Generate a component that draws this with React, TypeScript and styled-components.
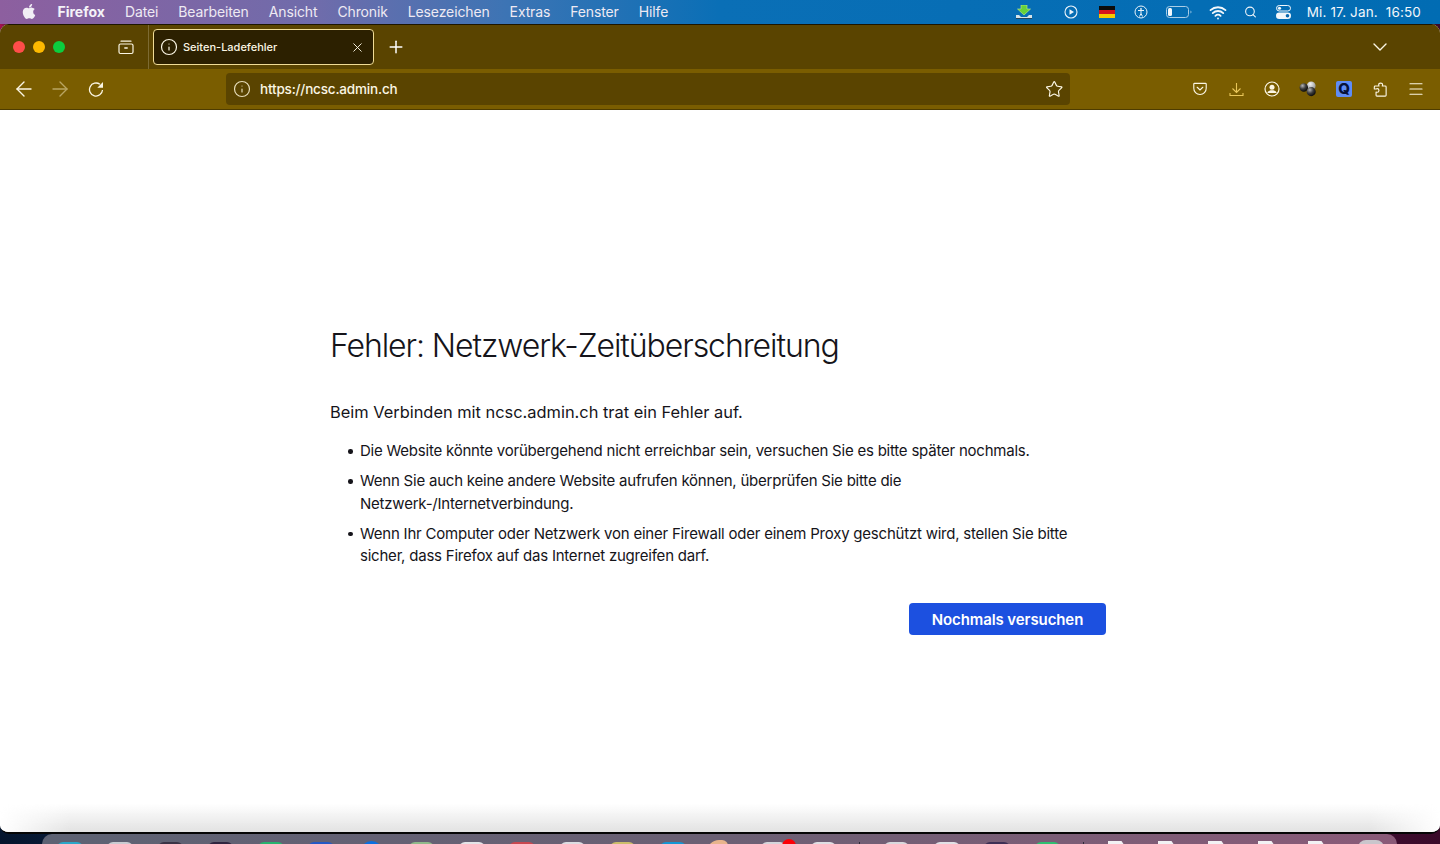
import styled, { createGlobalStyle } from 'styled-components';
import {
  ArrowLeft,
  ArrowRight,
  ChevronDown,
  Info,
  Menu,
  Plus,
  Search,
  Star,
  Wifi,
  X
} from 'lucide-react';
import { FaApple } from 'react-icons/fa';

const GlobalStyle = createGlobalStyle`
  html, body {
    margin: 0;
    padding: 0;
    height: 100%;
    overflow: hidden;
  }
  body {
    font-family: Inter, "Liberation Sans", sans-serif;
  }
`;

const menuItems = ['Datei', 'Bearbeiten', 'Ansicht', 'Chronik', 'Lesezeichen', 'Extras', 'Fenster', 'Hilfe'];

const hints = [
  'Die Website könnte vorübergehend nicht erreichbar sein, versuchen Sie es bitte später nochmals.',
  'Wenn Sie auch keine andere Website aufrufen können, überprüfen Sie bitte die Netzwerk-/Internetverbindung.',
  'Wenn Ihr Computer oder Netzwerk von einer Firewall oder einem Proxy geschützt wird, stellen Sie bitte sicher, dass Firefox auf das Internet zugreifen darf.'
];

// sichtbare Oberkanten der Dock-Icons, von links nach rechts
const dockLeft = ['#2aa7c9', '#c9ccd2', '#3a3346', '#2f2540', '#27b36f', '#2458c4'];
const dockLeftRest = ['#8fb98a', '#e4e4e8', '#c9474f', '#dcdde2', '#cbbd6a', '#1496d4'];
const dockMiddle = ['#d8d8dd', '#e1e1e6', '#3d2f55', '#2fbf71'];
const dockDocs = 5;

const App = () => {
  return (
    <Desktop>
      <GlobalStyle />
      <MenuBar>
        <MenuGroup>
          <AppleSlot>
            <FaApple size={17} color="#f1eef5" />
          </AppleSlot>
          <AppName>Firefox</AppName>
          {menuItems.map((item) => (
            <MenuItem key={item}>{item}</MenuItem>
          ))}
        </MenuGroup>
        <StatusGroup>
          <StatusSlot $width={18} $gap={31}>
            <svg width="18" height="14" viewBox="0 0 18 14">
              <path d="M6 0h6v4h3.500L9 10 2.500 4H6z" fill="#66d23a" stroke="#c8f08c" strokeWidth="0.6" />
              <path d="M1 10h3l2 2h6l2-2h3v3H1z" fill="#d5e4ea" />
              <rect x="1" y="13" width="16" height="1" fill="#25465c" />
            </svg>
          </StatusSlot>
          <StatusSlot $width={14} $gap={21}>
            <svg width="14" height="14" viewBox="0 0 14 14" fill="none">
              <circle cx="7" cy="7" r="6" stroke="#eaf3fa" strokeWidth="1.1" />
              <path d="M5.500 4.300v5.400L10 7z" fill="#eaf3fa" />
            </svg>
          </StatusSlot>
          <StatusSlot $width={16} $gap={19}>
            <Flag>
              <FlagStripe $color="#0c0c0c" />
              <FlagStripe $color="#d8141c" />
              <FlagStripe $color="#f7c900" />
            </Flag>
          </StatusSlot>
          <StatusSlot $width={14} $gap={18}>
            <svg width="14" height="14" viewBox="0 0 14 14" fill="none" stroke="#eaf3fa">
              <circle cx="7" cy="7" r="6" strokeWidth="1" />
              <circle cx="7" cy="4" r="0.9" fill="#eaf3fa" stroke="none" />
              <path d="M4 5.500h6M7 5.500v3M7 8.500l-1.500 3M7 8.500l1.500 3" strokeWidth="1" />
            </svg>
          </StatusSlot>
          <StatusSlot $width={26} $gap={17}>
            <svg width="26" height="12" viewBox="0 0 26 12" fill="none">
              <rect x="0.500" y="0.500" width="22" height="11" rx="3" stroke="#a9cde6" />
              <rect x="2" y="2" width="4" height="8" rx="1.500" fill="#f2f7fb" />
              <path d="M24.500 4.500v3c.7-.3 1-.9 1-1.500s-.3-1.200-1-1.500z" fill="#a9cde6" />
            </svg>
          </StatusSlot>
          <StatusSlot $width={18} $gap={17}>
            <Wifi size={19} strokeWidth={2.4} color="#f2f7fb" />
          </StatusSlot>
          <StatusSlot $width={13} $gap={19}>
            <Search size={18} strokeWidth={2} color="#f2f7fb" />
          </StatusSlot>
          <StatusSlot $width={15} $gap={16}>
            <svg width="15" height="14" viewBox="0 0 15 14">
              <rect x="0.500" y="0.500" width="14" height="5.500" rx="2.750" fill="none" stroke="#f2f7fb" />
              <circle cx="3.500" cy="3.250" r="1.600" fill="#f2f7fb" />
              <rect x="0" y="7.500" width="15" height="6.500" rx="3.250" fill="#f2f7fb" />
              <circle cx="11.500" cy="10.750" r="1.800" fill="#0a68ae" />
            </svg>
          </StatusSlot>
          <Clock>Mi. 17. Jan.&nbsp; 16:50</Clock>
        </StatusGroup>
      </MenuBar>

      <BrowserWindow>
        <TabStrip>
          <TrafficLights>
            <Light $color="#ff4d4a" />
            <Light $color="#fdb900" />
            <Light $color="#0ccd3f" />
          </TrafficLights>
          <TabListButton>
            <svg width="16" height="16" viewBox="0 0 16 16" fill="none" stroke="#fbf6e4" strokeWidth="1.200">
              <rect x="1" y="5" width="14" height="9.500" rx="1.500" />
              <path d="M3 2.200h10" strokeLinecap="round" />
              <path d="M6.300 9h3.400" strokeWidth="1.600" />
            </svg>
          </TabListButton>
          <TabDivider />
          <Tab>
            <Info size={18} strokeWidth={1.6} color="#fbf6e4" />
            <TabTitle>Seiten-Ladefehler</TabTitle>
            <X size={15} strokeWidth={1.5} color="#fbf6e4" />
          </Tab>
          <NewTab>
            <Plus size={20} strokeWidth={1.8} color="#fff" />
          </NewTab>
          <TabOverflow>
            <ChevronDown size={24} strokeWidth={1.4} color="#fbf6e4" />
          </TabOverflow>
        </TabStrip>

        <NavBar>
          <NavButtons>
            <NavButton>
              <ArrowLeft size={24} strokeWidth={1.4} color="#fbf6e4" />
            </NavButton>
            <NavButton>
              <ArrowRight size={24} strokeWidth={1.4} color="#b9a562" />
            </NavButton>
            <NavButton>
              <svg width="16" height="16" viewBox="0 0 16 16" fill="none">
                <path d="M14.500 9a6.500 6.500 0 1 1-2.600-5.700" stroke="#fbf6e4" strokeWidth="1.300" />
                <path d="M15 1v5.800H9.300z" fill="#fbf6e4" />
              </svg>
            </NavButton>
          </NavButtons>
          <UrlBar>
            <Info size={18} strokeWidth={1.6} color="#e6dcb8" />
            <UrlText>https://ncsc.admin.ch</UrlText>
            <StarSlot>
              <Star size={18.500} strokeWidth={1.5} color="#fbf6e4" />
            </StarSlot>
          </UrlBar>
          <Toolbar>
            <ToolSlot>
              <svg width="14" height="14" viewBox="0 0 16 15" fill="none" stroke="#fbf6e4" strokeWidth="1.300">
                <path d="M1.800 1h12.400c.5 0 .9.400.9.900V6.500A7 7 0 0 1 8 13.800 7 7 0 0 1 .9 6.500V1.900c0-.5.400-.9.900-.9z" />
                <path d="M4.800 5.500 8 8.600l3.200-3.100" strokeLinecap="round" />
              </svg>
            </ToolSlot>
            <ToolSlot>
              <svg width="15" height="15" viewBox="0 0 15 15" fill="none" stroke="#e9c65a" strokeWidth="1.100">
                <path d="M7.500 1v9M3.500 6.500l4 4 4-4" />
                <path d="M1 11v2.500h13V11" />
              </svg>
            </ToolSlot>
            <ToolSlot>
              <svg width="16" height="16" viewBox="0 0 16 16" fill="none">
                <circle cx="8" cy="8" r="7" stroke="#fbf6e4" strokeWidth="1.200" />
                <circle cx="8" cy="6.200" r="2.500" fill="#fbf6e4" />
                <path d="M3.500 11.200c1-1.400 2.600-1.900 4.500-1.900s3.500.5 4.500 1.900v.8h-9z" fill="#fbf6e4" />
              </svg>
            </ToolSlot>
            <ToolSlot>
              <svg width="18" height="16" viewBox="0 0 17 15">
                <defs>
                  <radialGradient id="ball" cx="35%" cy="30%" r="70%">
                    <stop offset="0%" stopColor="#b5b5b5" />
                    <stop offset="55%" stopColor="#3d3d3d" />
                    <stop offset="100%" stopColor="#0d0d0d" />
                  </radialGradient>
                  <radialGradient id="ballLight" cx="40%" cy="30%" r="75%">
                    <stop offset="0%" stopColor="#f4f4f4" />
                    <stop offset="100%" stopColor="#8a8a8a" />
                  </radialGradient>
                </defs>
                <circle cx="11.500" cy="4.500" r="4.200" fill="url(#ballLight)" />
                <circle cx="4.500" cy="6" r="4" fill="url(#ball)" />
                <circle cx="11.500" cy="10" r="4.300" fill="url(#ball)" />
              </svg>
            </ToolSlot>
            <ToolSlot>
              <QBadge>Q</QBadge>
            </ToolSlot>
            <ToolSlot>
              <svg width="14" height="15" viewBox="0 0 16 17" fill="none" stroke="#fbf6e4" strokeWidth="1.300" strokeLinejoin="round">
                <path d="M8.800 1.200c1.300 0 2.200 1 2.200 2 0 .5-.2.900-.4 1.300H14c.6 0 1 .4 1 1V15c0 .6-.4 1-1 1H4.500c-.6 0-1-.4-1-1v-3.700c.5.300.8.400 1.300.4 1.100 0 2-.9 2-2.100S5.900 7.500 4.800 7.500c-.5 0-.8.100-1.300.4H1.500V5.500c0-.6.400-1 1-1h4.400c-.3-.4-.4-.8-.4-1.300 0-1 1-2 2.300-2z" />
              </svg>
            </ToolSlot>
            <ToolSlot>
              <Menu size={18} strokeWidth={1.6} color="#fbf6e4" />
            </ToolSlot>
          </Toolbar>
        </NavBar>

        <Page>
          <ErrorBox>
            <ErrorTitle>Fehler: Netzwerk-Zeitüberschreitung</ErrorTitle>
            <ErrorIntro>Beim Verbinden mit ncsc.admin.ch trat ein Fehler auf.</ErrorIntro>
            <HintList>
              {hints.map((hint) => (
                <li key={hint}>{hint}</li>
              ))}
            </HintList>
            <ButtonRow>
              <RetryButton>Nochmals versuchen</RetryButton>
            </ButtonRow>
          </ErrorBox>
          <PageShade />
        </Page>
      </BrowserWindow>

      <Dock>
        {dockLeft.map((color) => (
          <DockIcon key={color} $color={color} />
        ))}
        <DockRoundIcon $color="#0a6fe0" />
        {dockLeftRest.map((color) => (
          <DockIcon key={color} $color={color} />
        ))}
        <DockHand />
        <DockBadgeIcon $color="#d5d5db">
          <DockBadge />
        </DockBadgeIcon>
        <DockIcon $color="#dfdfe4" />
        <DockSeparator />
        {dockMiddle.map((color) => (
          <DockIcon key={color} $color={color} />
        ))}
        <DockSeparator />
        {Array.from({ length: dockDocs }).map((_, i) => (
          <DockDoc key={i} />
        ))}
        <DockTrash />
      </Dock>
    </Desktop>
  );
};

const Desktop = styled.div`
  width: 1440px;
  height: 844px;
  overflow: hidden;
  display: flex;
  flex-direction: column;
  background:
    radial-gradient(14px 14px at 0 26px, #b0104f 0%, rgba(176, 16, 79, 0) 100%),
    radial-gradient(120px 60px at 0% 100%, #04142c 0%, rgba(4, 20, 44, 0) 100%),
    linear-gradient(90deg, #0a2140 0%, #4c1d50 60%, #3a0a2a 100%);
`;

const MenuBar = styled.div`
  height: 24px;
  flex: none;
  display: flex;
  align-items: center;
  justify-content: space-between;
  padding: 0 19px 0 21px;
  color: #f4f2f8;
  font-size: 14px;
  background: linear-gradient(90deg, #8d5f9f 0%, #6f6cab 22%, #3d74b4 35%, #0a6fb6 50%, #016cb3 100%);
`;

const MenuGroup = styled.div`
  display: flex;
  align-items: center;
  gap: 20px;
  padding-bottom: 2px;
`;

const AppleSlot = styled.div`
  width: 16px;
  display: flex;
  align-items: center;
  margin-right: 0.500px;
`;

const AppName = styled.span`
  font-weight: 700;
`;

const MenuItem = styled.span`
  font-weight: 400;
  letter-spacing: -0.130px;
  color: #eeeaf3;
`;

const StatusGroup = styled.div`
  display: flex;
  align-items: center;
`;

const StatusSlot = styled.div<{ $width: number; $gap: number }>`
  width: ${(props) => props.$width}px;
  margin-right: ${(props) => props.$gap}px;
  display: flex;
  align-items: center;
  justify-content: center;
`;

const Flag = styled.div`
  width: 16px;
  height: 12px;
  flex: none;
  display: flex;
  flex-direction: column;
`;

const FlagStripe = styled.div<{ $color: string }>`
  flex: 1;
  background: ${(props) => props.$color};
`;

const Clock = styled.span`
  font-size: 13.500px;
  letter-spacing: 0.150px;
  color: #f2f7fb;
  white-space: nowrap;
`;

const BrowserWindow = styled.div`
  height: 810px;
  flex: none;
  display: flex;
  flex-direction: column;
  border-radius: 9px;
  overflow: hidden;
  box-sizing: border-box;
  border-bottom: 2px solid #050505;
  background: #fff;
`;

const TabStrip = styled.div`
  height: 45px;
  flex: none;
  display: flex;
  align-items: center;
  background: #5a4400;
  border-top: 1px solid #1c1500;
  box-sizing: border-box;
`;

const TrafficLights = styled.div`
  display: flex;
  gap: 8px;
  padding-left: 13px;
  width: 104px;
  box-sizing: border-box;
`;

const Light = styled.span<{ $color: string }>`
  width: 12px;
  height: 12px;
  border-radius: 50%;
  background: ${(props) => props.$color};
`;

const TabListButton = styled.div`
  width: 44px;
  display: flex;
  justify-content: center;
`;

const TabDivider = styled.div`
  width: 1px;
  height: 100%;
  background: #7d6b33;
  margin-right: 4px;
`;

const Tab = styled.div`
  width: 221px;
  height: 36px;
  box-sizing: border-box;
  display: flex;
  align-items: center;
  padding: 0 8px 0 6px;
  background: #2c2000;
  border: 1px solid #f0dc96;
  border-radius: 4px;
  color: #fbf6e4;
`;

const TabTitle = styled.span`
  flex: 1;
  margin-left: 5px;
  font-size: 11px;
  font-weight: 500;
`;

const NewTab = styled.div`
  width: 43px;
  display: flex;
  justify-content: center;
`;

const TabOverflow = styled.div`
  margin-left: auto;
  padding-right: 48px;
  display: flex;
  justify-content: flex-end;
`;

const NavBar = styled.div`
  height: 41px;
  flex: none;
  box-sizing: border-box;
  display: flex;
  align-items: center;
  background: #7a5d00;
  border-bottom: 1px solid #4e3c00;
`;

const NavButtons = styled.div`
  width: 226px;
  flex: none;
  display: flex;
  padding-left: 6px;
  box-sizing: border-box;
`;

const NavButton = styled.div`
  width: 36px;
  height: 24px;
  display: flex;
  align-items: center;
  justify-content: center;
`;

const UrlBar = styled.div`
  width: 844px;
  height: 32px;
  flex: none;
  box-sizing: border-box;
  display: flex;
  align-items: center;
  padding: 0 6px 0 7px;
  background: #5a4400;
  border-radius: 4px;
`;

const UrlText = styled.span`
  flex: 1;
  margin-left: 9px;
  font-size: 13.500px;
  letter-spacing: -0.180px;
  font-weight: 500;
  color: #fbf6e4;
`;

const StarSlot = styled.div`
  width: 20px;
  display: flex;
  justify-content: center;
`;

const Toolbar = styled.div`
  flex: 1;
  display: flex;
  justify-content: flex-end;
  padding-right: 6px;
`;

const ToolSlot = styled.div`
  width: 36px;
  height: 24px;
  display: flex;
  align-items: center;
  justify-content: center;
`;

const QBadge = styled.div`
  width: 16px;
  height: 16px;
  border-radius: 2px;
  background: #5e8cf7;
  color: #07123a;
  font-size: 15px;
  font-weight: 800;
  line-height: 16px;
  text-align: center;
`;

const Page = styled.div`
  position: relative;
  flex: 1;
  background: #fff;
  padding: 214px 0 0 330px;
`;

const ErrorBox = styled.div`
  width: 776px;
  color: #15141a;
`;

const ErrorTitle = styled.h1`
  margin: 0;
  font-size: 32px;
  line-height: 44px;
  font-weight: 300;
  letter-spacing: -1.080px;
`;

const ErrorIntro = styled.p`
  margin: 32px 0 0;
  font-size: 16.400px;
  line-height: 24px;
  font-weight: 400;
`;

const HintList = styled.ul`
  margin: 16px 0 0;
  padding: 0 0 0 30px;
  list-style: none;
  font-size: 15px;
  line-height: 22.500px;
  letter-spacing: -0.220px;

  li {
    position: relative;
    margin-bottom: 7.500px;
  }

  li::before {
    content: '';
    position: absolute;
    left: -12px;
    top: 9px;
    width: 4.500px;
    height: 4.500px;
    border-radius: 50%;
    background: #15141a;
  }
`;

const ButtonRow = styled.div`
  display: flex;
  justify-content: flex-end;
  margin-top: 35px;
`;

const RetryButton = styled.button`
  width: 197px;
  height: 32px;
  padding: 1px 0 0;
  border: none;
  border-radius: 4px;
  background: #1c50e0;
  color: #fff;
  font-family: inherit;
  font-size: 15px;
  letter-spacing: -0.100px;
  font-weight: 600;
`;

const PageShade = styled.div`
  position: absolute;
  left: 0;
  right: 0;
  bottom: 0;
  height: 28px;
  background: linear-gradient(180deg, rgba(222, 222, 222, 0) 0%, #e2e2e2 100%);
  -webkit-mask-image: linear-gradient(90deg, transparent 0, #000 70px, #000 calc(100% - 70px), transparent 100%);
  mask-image: linear-gradient(90deg, transparent 0, #000 70px, #000 calc(100% - 70px), transparent 100%);
`;

const Dock = styled.div`
  margin: 0 43px 0 42px;
  flex: 1;
  min-height: 0;
  overflow: hidden;
  display: flex;
  align-items: flex-start;
  gap: 24.750px;
  padding: 8px 0 0 15px;
  border-radius: 12px 12px 0 0;
  background: linear-gradient(90deg, #5d6273 0%, #6b6074 50%, #8a5a78 100%);
`;

const DockIcon = styled.div<{ $color: string }>`
  width: 25.500px;
  height: 30px;
  flex: none;
  border-radius: 6px;
  background: ${(props) => props.$color};
`;

const DockRoundIcon = styled(DockIcon)`
  margin-top: -1.500px;
  border-radius: 50%;
`;

const DockHand = styled.div`
  width: 21px;
  height: 30px;
  flex: none;
  margin: -2px 7.500px 0 -3px;
  border-radius: 12px 6px 0 0;
  background: #e8b48c;
`;

const DockBadgeIcon = styled(DockIcon)`
  position: relative;
`;

const DockBadge = styled.div`
  position: absolute;
  top: -3px;
  right: -10px;
  width: 14px;
  height: 14px;
  border-radius: 50%;
  background: #fb0007;
`;

const DockSeparator = styled.div`
  width: 1px;
  height: 12px;
  flex: none;
  margin: 0 -1px 0 -2px;
  background: #2d2a38;
`;

const DockDoc = styled.div`
  width: 20px;
  height: 30px;
  flex: none;
  margin: -1px 5.250px 0 0;
  background: #f2f2f4;
  clip-path: polygon(0 0, 70% 0, 100% 30%, 100% 100%, 0 100%);
`;

const DockTrash = styled.div`
  width: 26px;
  height: 30px;
  flex: none;
  margin-top: -2px;
  border-radius: 8px 8px 0 0;
  background: #c9c6cc;
`;

export default App;
